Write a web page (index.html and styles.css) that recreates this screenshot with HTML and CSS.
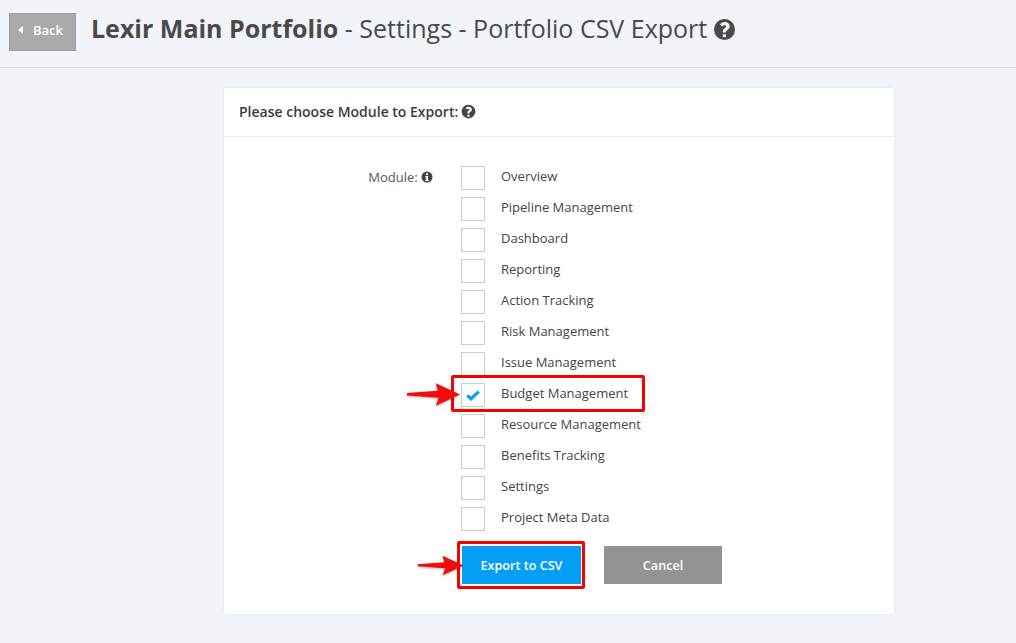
FILE: index.html
```html
<!DOCTYPE html>
<html>
<head>
  <title>Portfolio CSV Export</title>
  <link rel="stylesheet" href="styles.css">
</head>
<body>
  <div class="page-header">
    <a class="back-btn"><span class="back-arrow"></span>Back</a>
    <h1><strong>Lexir Main Portfolio</strong> - Settings - Portfolio CSV Export
      <svg class="help-icon-lg" viewBox="0 0 24 24"><use href="#icon-help"/></svg>
    </h1>
  </div>

  <svg class="defs" width="0" height="0">
    <symbol id="icon-help" viewBox="0 0 24 24">
      <path fill-rule="evenodd" d="M12 1a11 11 0 1 0 0 22 11 11 0 0 0 0-22zM10.200 17h3.400v3.200h-3.400zM12.100 4.200c3 0 5.300 1.800 5.300 4.500 0 2-1.100 2.900-2.300 3.700-1 .7-1.500 1.100-1.500 2.100v.6h-3.400v-.9c0-1.900.9-2.800 2-3.500.9-.6 1.500-1 1.500-1.800 0-.8-.7-1.400-1.700-1.400-1 0-1.800.5-2.500 1.400L7.300 6.800C8.400 5.200 10 4.200 12.100 4.200z"/>
    </symbol>
    <symbol id="red-arrow" viewBox="0 0 58 26">
      <path d="M0 11.500L33 9 31 1 57 13 31 25 34 16.500 0 14z" fill="#f60a0a"/>
    </symbol>
  </svg>

  <div class="card">
    <div class="card-title">Please choose Module to Export:
      <svg class="help-icon" viewBox="0 0 24 24"><use href="#icon-help"/></svg>
    </div>
    <div class="card-body">
      <div class="module-form">
        <div class="module-label">Module:
          <svg class="info-icon" viewBox="0 0 24 24">
            <path fill-rule="evenodd" d="M12 1a11 11 0 1 0 0 22 11 11 0 0 0 0-22zM10 4.500h4v3.500h-4zM8.500 10h5.500v7.500h1.500V20h-7v-2.500H10V12.500H8.500z"/>
          </svg>
        </div>
        <div class="module-list">
          <div class="module-row"><span class="checkbox"></span><span>Overview</span></div>
          <div class="module-row"><span class="checkbox"></span><span>Pipeline Management</span></div>
          <div class="module-row"><span class="checkbox"></span><span>Dashboard</span></div>
          <div class="module-row"><span class="checkbox"></span><span>Reporting</span></div>
          <div class="module-row"><span class="checkbox"></span><span>Action Tracking</span></div>
          <div class="module-row"><span class="checkbox"></span><span>Risk Management</span></div>
          <div class="module-row"><span class="checkbox"></span><span>Issue Management</span></div>
          <div class="module-row">
            <span class="checkbox">
              <svg class="check-mark" viewBox="0 0 14 11"><path d="M1.200 5.400l3.800 3.400L12.800 1.600" fill="none" stroke="#089ff5" stroke-width="3.200"/></svg>
            </span>
            <span>Budget Management</span>
            <div class="mark-box mark-row"></div>
            <svg class="mark-arrow arrow-row" viewBox="0 0 58 26"><use href="#red-arrow"/></svg>
          </div>
          <div class="module-row"><span class="checkbox"></span><span>Resource Management</span></div>
          <div class="module-row"><span class="checkbox"></span><span>Benefits Tracking</span></div>
          <div class="module-row"><span class="checkbox"></span><span>Settings</span></div>
          <div class="module-row"><span class="checkbox"></span><span>Project Meta Data</span></div>
        </div>
      </div>
      <div class="actions">
        <div class="export-wrap">
          <button class="btn btn-export">Export to CSV</button>
          <div class="mark-box mark-btn"></div>
          <svg class="mark-arrow arrow-btn" viewBox="0 0 58 26"><use href="#red-arrow"/></svg>
        </div>
        <button class="btn btn-cancel">Cancel</button>
      </div>
    </div>
  </div>
</body>
</html>
```

FILE: styles.css
```css
body {
  margin: 0;
  height: 643px;
  overflow: hidden;
  background-color: #f1f4f9;
  font-family: "Open Sans", sans-serif;
  color: #444;
}

.defs {
  position: absolute;
}

/* header */
.page-header {
  display: flex;
  align-items: flex-start;
  height: 54px;
  padding: 13px 0 0 9px;
  border-bottom: 1px solid #d8dbe3;
}

.back-btn {
  display: flex;
  align-items: center;
  width: 67px;
  height: 38px;
  box-sizing: border-box;
  padding: 0 0 4px 8px;
  background-color: #aaa;
  border: 1px solid #a0a0a0;
  color: #fff;
  font-size: 13px;
  font-weight: 600;
}

.back-arrow {
  width: 0;
  height: 0;
  margin-right: 10px;
  border-top: 4px solid transparent;
  border-bottom: 4px solid transparent;
  border-right: 5px solid #fff;
}

h1 {
  margin: 0 0 0 15px;
  font-size: 25px;
  font-weight: 400;
  line-height: 30px;
  color: #4a4a4a;
}

h1 strong {
  font-weight: 700;
}

.help-icon-lg {
  width: 23px;
  height: 23px;
  margin-left: -1px;
  fill: #4a4a4a;
  vertical-align: -3px;
}

/* card */
.card {
  width: 670px;
  height: 526px;
  margin: 20px 0 0 224px;
  background-color: #fff;
  box-shadow: 0 0 3px rgba(0, 0, 0, 0.08);
}

.card-title {
  height: 48px;
  padding-left: 15px;
  border-bottom: 1px solid #eee;
  font-size: 14px;
  font-weight: 600;
  line-height: 48px;
  color: #3c3c3c;
}

.help-icon {
  width: 15px;
  height: 15px;
  margin-left: -1px;
  fill: #444;
  vertical-align: -2px;
}

.card-body {
  padding-top: 29px;
}

.module-form {
  display: flex;
}

.module-label {
  width: 209px;
  height: 22px;
  text-align: right;
  font-size: 13px;
  line-height: 22px;
  color: #555;
}

.info-icon {
  width: 12px;
  height: 12px;
  fill: #444;
  vertical-align: -1px;
}

.module-list {
  margin-left: 28px;
}

.module-row {
  position: relative;
  display: flex;
  align-items: flex-start;
  height: 24px;
  margin-bottom: 7px;
  font-size: 13px;
  line-height: 20px;
  color: #444;
}

.checkbox {
  display: flex;
  align-items: center;
  justify-content: center;
  width: 24px;
  height: 24px;
  box-sizing: border-box;
  margin-right: 16px;
  background-color: #fff;
  border: 1px solid #ccc;
}

.check-mark {
  width: 14px;
  height: 11px;
}

/* buttons */
.actions {
  display: flex;
  margin: 8px 0 0 238px;
}

.export-wrap {
  position: relative;
  margin-right: 23px;
}

.btn {
  display: block;
  height: 38px;
  padding: 0;
  border: none;
  color: #fff;
  font-family: "Open Sans", sans-serif;
  font-size: 12.600px;
  font-weight: 600;
}

.btn-export {
  width: 119px;
  background-color: #049ff5;
}

.btn-cancel {
  width: 118px;
  background-color: #939393;
}

/* red screenshot annotations */
.mark-box {
  position: absolute;
  box-sizing: border-box;
  border: 3px solid #f60000;
  border-radius: 2px;
}

.mark-row {
  left: -10px;
  top: -8px;
  width: 194px;
  height: 37px;
}

.mark-btn {
  left: -5px;
  top: -5px;
  width: 128px;
  height: 48px;
}

.mark-arrow {
  position: absolute;
  filter: drop-shadow(0 1px 1px rgba(0, 0, 0, 0.3));
}

.arrow-row {
  left: -54px;
  top: -1px;
  width: 54px;
  height: 25px;
}

.arrow-btn {
  left: -45px;
  top: 9px;
  width: 48px;
  height: 21px;
}
```
